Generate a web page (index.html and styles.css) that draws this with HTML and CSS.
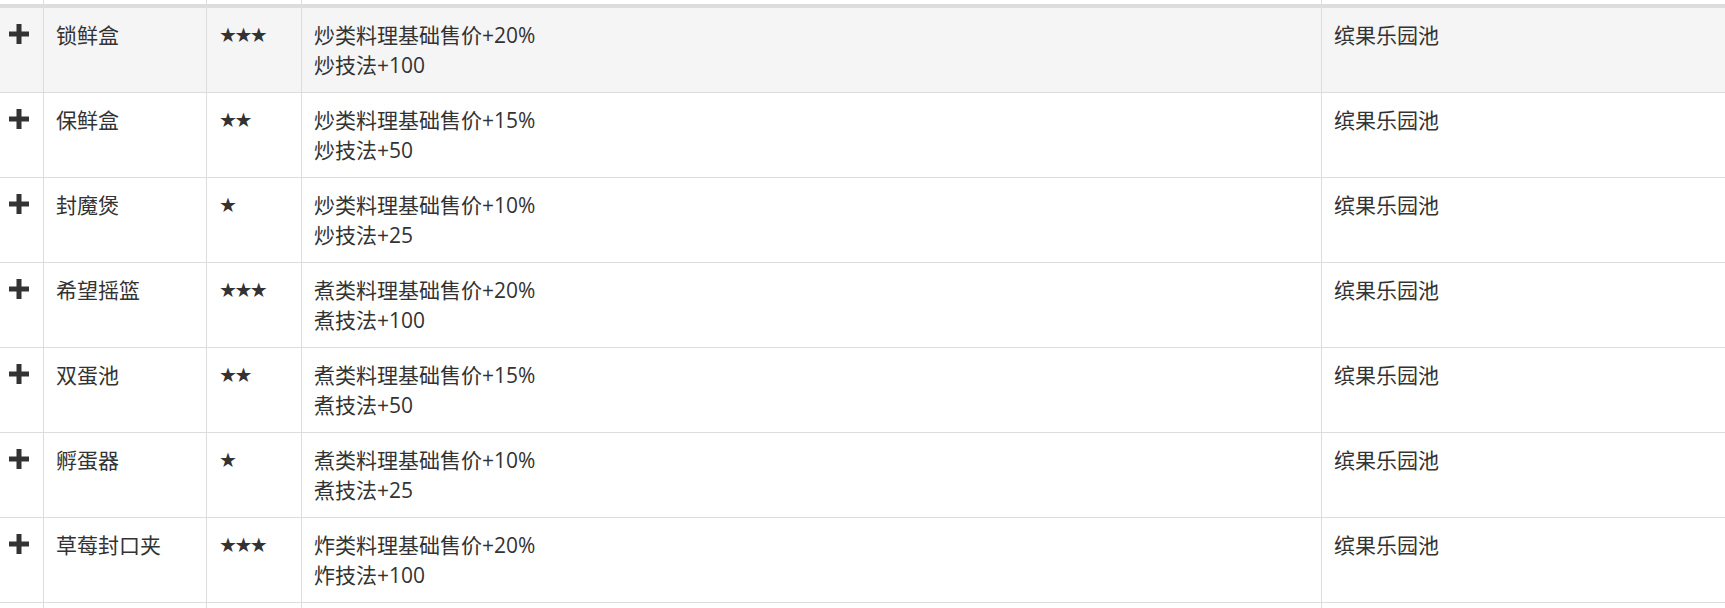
FILE: index.html
```html
<!DOCTYPE html>
<html lang="zh-CN">
<head>
    <meta charset="UTF-8">
    <meta name="viewport" content="width=device-width, initial-scale=1.0">
    <title>厨具列表</title>
    <link rel="stylesheet" href="styles.css">
</head>
<body>
    <table class="equip-table">
        <colgroup>
            <col class="col-toggle">
            <col class="col-name">
            <col class="col-rarity">
            <col class="col-skill">
            <col class="col-origin">
        </colgroup>
        <thead>
            <tr class="head-stub">
                <th></th><th></th><th></th><th></th><th></th>
            </tr>
        </thead>
        <tbody>
            <tr class="is-hover">
                <td class="toggle"><svg class="plus" viewBox="0 0 20 20"><path d="M7.5 0h5v7.5H20v5h-7.5V20h-5v-7.5H0v-5h7.5z"/></svg></td>
                <td>锁鲜盒</td>
                <td><span class="stars">★★★</span></td>
                <td>炒类料理基础售价+20%<br>炒技法+100</td>
                <td>缤果乐园池</td>
            </tr>
            <tr>
                <td class="toggle"><svg class="plus" viewBox="0 0 20 20"><path d="M7.5 0h5v7.5H20v5h-7.5V20h-5v-7.5H0v-5h7.5z"/></svg></td>
                <td>保鲜盒</td>
                <td><span class="stars">★★</span></td>
                <td>炒类料理基础售价+15%<br>炒技法+50</td>
                <td>缤果乐园池</td>
            </tr>
            <tr>
                <td class="toggle"><svg class="plus" viewBox="0 0 20 20"><path d="M7.5 0h5v7.5H20v5h-7.5V20h-5v-7.5H0v-5h7.5z"/></svg></td>
                <td>封魔煲</td>
                <td><span class="stars">★</span></td>
                <td>炒类料理基础售价+10%<br>炒技法+25</td>
                <td>缤果乐园池</td>
            </tr>
            <tr>
                <td class="toggle"><svg class="plus" viewBox="0 0 20 20"><path d="M7.5 0h5v7.5H20v5h-7.5V20h-5v-7.5H0v-5h7.5z"/></svg></td>
                <td>希望摇篮</td>
                <td><span class="stars">★★★</span></td>
                <td>煮类料理基础售价+20%<br>煮技法+100</td>
                <td>缤果乐园池</td>
            </tr>
            <tr>
                <td class="toggle"><svg class="plus" viewBox="0 0 20 20"><path d="M7.5 0h5v7.5H20v5h-7.5V20h-5v-7.5H0v-5h7.5z"/></svg></td>
                <td>双蛋池</td>
                <td><span class="stars">★★</span></td>
                <td>煮类料理基础售价+15%<br>煮技法+50</td>
                <td>缤果乐园池</td>
            </tr>
            <tr>
                <td class="toggle"><svg class="plus" viewBox="0 0 20 20"><path d="M7.5 0h5v7.5H20v5h-7.5V20h-5v-7.5H0v-5h7.5z"/></svg></td>
                <td>孵蛋器</td>
                <td><span class="stars">★</span></td>
                <td>煮类料理基础售价+10%<br>煮技法+25</td>
                <td>缤果乐园池</td>
            </tr>
            <tr>
                <td class="toggle"><svg class="plus" viewBox="0 0 20 20"><path d="M7.5 0h5v7.5H20v5h-7.5V20h-5v-7.5H0v-5h7.5z"/></svg></td>
                <td>草莓封口夹</td>
                <td><span class="stars">★★★</span></td>
                <td>炸类料理基础售价+20%<br>炸技法+100</td>
                <td>缤果乐园池</td>
            </tr>
            <tr class="tail-row">
                <td></td><td></td><td></td><td></td><td></td>
            </tr>
        </tbody>
    </table>
</body>
</html>
```

FILE: styles.css
```css
* {
    box-sizing: border-box;
    margin: 0;
    padding: 0;
}

body {
    font-family: "Open Sans", "Noto Sans CJK SC", sans-serif;
    font-size: 21px;
    line-height: 30px;
    color: #333;
    background-color: #fff;
    overflow: hidden;
}

.equip-table {
    width: 100%;
    table-layout: fixed;
    border-collapse: separate;
    border-spacing: 0;
}

.col-toggle { width: 44px; }
.col-name { width: 163px; }
.col-rarity { width: 95px; }
.col-skill { width: 1020px; }

.head-stub th {
    height: 8px;
    padding: 0;
    border-right: 1px solid #ddd;
    border-bottom: 4px solid #ddd;
}

.equip-table td {
    padding: 12px;
    vertical-align: top;
    text-align: left;
    border-right: 1px solid #ddd;
    border-bottom: 1px solid #ddd;
}

.head-stub th:last-child,
.equip-table td:last-child {
    border-right: none;
}

.equip-table .toggle {
    padding-left: 9px;
    padding-right: 0;
}

.plus {
    display: block;
    width: 20px;
    height: 20px;
    margin-top: 4px;
    fill: #333;
}

.stars {
    font-family: "DejaVu Sans", sans-serif;
    font-size: 20px;
    letter-spacing: -2.5px;
    vertical-align: 2px;
}

.equip-table .tail-row td {
    height: 84px;
}

.is-hover td {
    background-color: #f5f5f5;
}
```
